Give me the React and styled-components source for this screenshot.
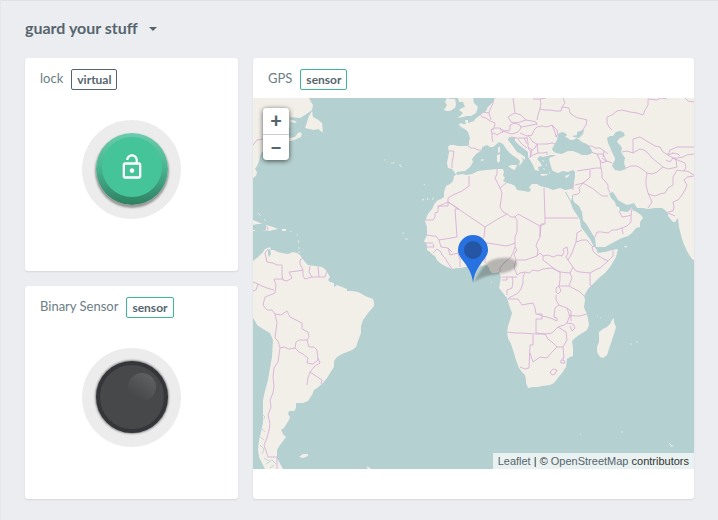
import { createGlobalStyle, styled } from "styled-components";

const LAND = [
  // Europe, Asia and Africa
  "M495 98L493 102 490 105 488 107 486 111 483 113 481 114 478 117 476 118 474 121 471 122 468 123 468 120 465 120 466 124 463 124 460 123 459 125 461 127 463 128 466 130 468 132 469 135 470 138 469 142 469 145 467 146 462 146 458 146 454 145 450 145 448 147 449 152 448 158 447 163 448 168 452 169 455 173 456 175 454 176 453 181 450 184 446 186 444 192 444 197 441 199 438 200 435 203 432 209 428 214 425 221 427 227 427 235 424 241 427 245 427 250 430 252 433 255 435 256 437 260 440 263 443 265 447 267 452 269 457 268 461 268 465 267 473 267 478 267 482 266 487 265 489 268 490 271 492 273 495 273 499 272 501 277 500 283 499 288 503 293 507 298 508 301 509 305 512 313 510 320 508 326 507 332 508 338 511 344 513 350 516 360 519 368 522 372 525 375 526 380 526 383 528 388 533 387 538 387 542 386 550 385 554 383 557 379 562 373 566 367 567 359 570 357 573 356 573 348 572 341 575 338 579 335 584 332 587 330 589 325 588 319 587 314 585 310 584 307 585 300 584 296 588 289 592 285 596 281 600 277 605 273 610 267 613 262 616 257 618 249 612 250 605 252 598 253 596 247 605 247 614 242 622 238 628 236 632 233 636 228 640 227 640 222 643 218 641 215 638 213 635 211 633 210 633 205 637 208 643 208 648 209 655 208 662 208 665 210 668 213 668 216 673 222 675 222 678 218 679 227 681 235 683 242 686 249 688 253 692 259 694 260V98Z",
  // British Isles
  "M458 98H473L474 103 478 107 476 113 471 116 467 116 463 117 458 118 463 113 459 110 462 108 465 107 463 102 459 102Z",
  "M447 98L451 99 455 99 456 104 455 108 450 111 447 111 444 110 447 105 445 102Z",
  // North America
  "M253 98H309L311 102 313 105 312 110 305 115 300 118 290 117 290 125 286 140 262 152 260 156 259 161 257 166 255 169 257 172 256 176 253 178Z",
  "M289 121L293 120 297 122 294 123ZM289 138L295 137 298 133 300 132 302 134 301 137 292 141 289 141Z",
  "M312 111L313 117 317 119 322 123 323 132 320 131 319 129 314 130 305 128 307 122 309 116Z",
  // Caribbean
  "M253 220L258 222 262 224 257 224 253 225ZM262 230L266 230 266 225 273 227 278 229 273 230 270 231ZM282 229L286 229 286 231 282 231ZM253 230L255 230 255 231 253 231Z",
  // South America
  "M253 261L257 258 260 255 263 252 265 249 270 247 271 250 274 250 278 252 282 253 288 254 293 252 297 253 300 255 302 258 305 262 308 265 315 266 322 267 326 270 330 277 328 280 330 282 334 283 334 287 337 285 342 287 347 289 347 291 352 291 358 292 362 294 365 296 373 299 374 303 374 306 368 313 363 320 361 326 361 333 358 341 356 347 352 350 347 352 342 354 337 357 334 361 334 367 330 373 327 378 322 384 317 388 314 390 312 395 308 401 303 403 296 403 296 408 294 411 289 411 288 414 290 417 289 420 287 423 284 428 281 430 283 434 286 437 283 441 280 445 277 450 277 458 283 469H265L262 463 259 457 258 449 259 440 261 432 263 423 263 412 263 400 265 391 268 380 270 368 272 357 273 340 270 333 263 329 257 325 255 321 253 318Z",
  "M299 457L303 454 308 454 308 456 303 458ZM366 466L370 468 371 469 368 469Z",
  // Madagascar
  "M614 318L614 322 616 327 615 331 612 340 609 349 607 355 603 358 600 357 597 352 597 347 599 342 599 332 603 329 607 327 610 324 612 320Z",
];

const SEAS = [
  // Mediterranean
  "M456 174L457 172 465 171 470 167 473 162 472 159 476 154 482 150 482 147 487 145 490 147 493 147 499 142 503 144 507 150 511 154 515 157 518 159 520 161 519 165 517 167 521 164 523 161 522 158 525 160 525 157 521 154 517 152 512 145 508 140 509 137 515 138 515 141 519 145 523 148 528 152 528 157 530 160 533 165 535 170 539 171 538 167 542 166 540 162 537 159 540 156 543 157 547 156 552 155 549 159 550 163 552 170 555 172 558 173 563 171 568 172 573 170 575 172 575 177 574 182 573 188 571 189 565 190 560 188 553 190 548 188 544 187 540 186 537 184 532 184 529 187 531 190 529 192 524 191 517 190 515 186 511 184 507 183 503 181 505 178 503 175 504 172 503 169 497 169 487 170 478 171 472 174 467 175 462 174 458 175Z",
  // Marmara, Black Sea and Azov
  "M548 157L551 155 555 155 555 156 551 157Z",
  "M562 132L565 133 567 135 565 137 568 138 570 140 573 140 577 138 582 142 587 144 590 147 592 151 591 154 587 155 582 155 578 153 573 151 568 151 564 153 561 154 556 153 553 151 552 149 553 147 557 140 558 134Z",
  "M572 136L577 135 577 132 584 130 583 134 579 138 574 137Z",
  // Caspian
  "M616 132L620 131 623 132 625 135 623 137 620 138 618 140 617 142 620 145 622 148 621 152 625 158 624 163 626 169 620 171 615 170 612 166 613 163 615 160 615 158 612 152 610 147 608 143 607 138 610 136 613 136Z",
  // Red Sea and the Gulf
  "M565 192L566 192 571 201 572 198 572 195 573 195 573 200 575 203 579 206 582 212 583 220 587 225 590 230 593 235 595 238 596 247 598 247 598 253 597 250 593 245 590 239 587 235 581 227 580 220 577 215 573 209 570 201 567 196Z",
  "M609 193L613 192 615 195 618 200 623 203 627 205 631 204 634 203 637 208 633 211 632 207 629 211 627 212 620 211 619 207 616 206 615 202 611 198Z",
  // Maracaibo
  "M268 250L270 249 271 254 269 257 268 254Z",
];

const ISLANDS = [
  "M498 148L500 146 500 152 498 153ZM497 155L500 154 500 161 498 163 497 161Z",
  "M508 166L512 165 517 165 515 170 512 169Z",
  "M480 160L483 159 484 160 482 161ZM540 174L547 174 548 175 542 176ZM565 176L570 174 568 177 566 178Z",
  "M542 160L544 161 543 162ZM546 164L547 165 546 166ZM543 168L545 169 544 170ZM549 171L550 173 549 174ZM624 246L627 246 626 248Z",
  "M422 199L424 199 423 201ZM427 198L429 199 427 200ZM432 199L434 197 433 200ZM423 184L425 184 425 185ZM400 166L402 166 401 167Z",
];

const CHANNELS =
  "M262 414L265 417 262 421M261 428L265 432M260 437L264 440M260 445L264 449 262 454M264 458L269 461M266 464L272 460 276 464M270 468L274 465";

const ISLETS =
  "M669 443L672 446M670 446H674M580 434H581M621 432H623M597 316H598M600 318H601M630 344H632M636 342H638M290 231L292 232M297 234L298 236M298 240L299 243M299 247V249M258 213L261 216M264 219L266 221M298 252H300M384 160H385M391 163H395M399 165H401M402 233H404M405 239H408M491 282H492";

const BORDERS = [
  // Western and central Europe
  "M449 151L454 151 453 158 452 163 452 168",
  "M468 146L471 148 474 148 478 150 482 150",
  "M480 113L482 117 486 118 490 121 495 123 494 128 491 130 492 134 492 138 493 142",
  "M493 100L493 104 492 105 490 110 489 113 491 120M483 112L489 113",
  "M491 130L495 128 500 128 503 132 500 133 497 135 494 133 492 134",
  "M500 129L505 131 510 130 510 125 515 123 520 125 521 128 518 132 512 134 503 131",
  "M508 117L511 115 515 113 521 115 524 118 526 120 520 122 515 123 511 122 508 117",
  "M513 98L514 105 515 113M526 120L532 121 536 122 537 125",
  "M540 99L541 104 540 108 539 112 538 115 537 120M533 99L540 99 546 98",
  "M540 109L545 110 550 110 556 111 561 111 562 107 569 108 570 113 574 116 578 118 583 119 587 120 586 125 584 128 582 131M563 98L565 103 562 107",
  "M521 127L527 126 532 125 537 124M537 127L534 130 532 135 527 136 520 133M537 127L542 126 547 127 552 125",
  "M528 135L530 138 533 142 537 144 542 144 547 144 552 143 555 144",
  "M552 125L555 132 556 137M552 125L557 130 558 134 556 137",
  "M511 137L517 138 527 138M518 139L521 143 524 146 527 148M527 137L528 143 528 147 532 150 535 148 537 144M532 150L530 157 533 155 538 153 543 153 547 152 547 155M528 148L531 152 530 158M537 144L538 153M524 138L527 144",
  // Russia, Caucasus and central Asia
  "M667 99L661 98 657 100 648 99 648 105 645 110 643 115 637 113 630 112 622 110 617 111 612 115 607 117 607 123 609 127 612 130M685 98L688 101 694 102",
  "M587 146L592 146 595 148 600 148 604 151 608 154M591 152L597 154 603 154M597 154L600 160 602 163 607 161 612 163M603 154L607 162 602 158M604 151L603 157",
  "M600 160L601 168 596 168 590 169 583 170 577 171",
  "M590 170L590 177 587 180 583 183 579 184 575 185",
  "M573 190L573 183M573 195L578 194 580 192 579 188 583 183 588 186 592 188 597 192 602 196 608 196",
  "M601 168L602 173 602 178 605 181 608 185 608 189 610 192",
  "M619 211L622 217 628 216 631 215 632 208M631 215L631 222 627 226 622 228 623 234M622 228L616 230 612 230 608 233 602 232 597 232 595 237",
  "M622 152L627 151 633 153 633 139 640 137 645 140 650 143 655 146 660 147 663 152 668 155 673 153",
  "M633 153L636 151 640 149 644 150 647 152 652 158 657 162 663 167",
  "M626 168L631 166 637 166 642 169 647 173 646 179 646 185 648 193 652 202 648 208",
  "M647 173L652 174 657 172 663 167 668 169 673 168 677 167 676 160 673 158",
  "M648 194L655 196 660 194 665 193 668 188 673 185 673 177 677 170 682 171 687 171 694 175",
  "M694 176L687 177 684 180 687 185 685 190 682 195 678 200 673 202 674 207 673 211 668 212M668 213L675 216",
  "M694 147L685 147 677 147 670 150 668 155 673 158 677 158 683 157 687 155 694 154M673 158L680 161 685 163 686 167 684 171M672 153L678 154 680 156M666 160L670 162 673 158",
  // North and west Africa
  "M544 188L545 218H578M545 218V224H541L540 237",
  "M469 176L469 186 462 191 453 195 448 198 448 202 485 227 496 220 507 214",
  "M448 206H438V212L435 213V217L433 220H425M448 202L441 205 438 207M448 202V206",
  "M497 169L497 174 495 178 500 188 506 183M500 188L502 193 501 200 500 207 503 212 507 214 511 217 515 217 518 214 540 226 544 224",
  "M448 202L459 209 455 209 457 237 439 240 436 236 433 236 427 235",
  "M425 243H433M427 247H434L433 244M439 240L441 247 448 248 450 255 458 253 460 260 460 267",
  "M433 253L437 249 441 252 442 255 445 258 448 263 452 269M448 248L452 252M458 253L463 248 471 243 478 246",
  "M485 227L484 237 478 241 487 243 494 244 500 245 506 246 510 245 515 243 515 237 517 232 517 220 515 217",
  "M487 243L485 250 485 263M477 248L479 257 480 266",
  "M515 243L515 247 513 253 510 258 505 262 500 268 500 272M515 247L517 250 514 254 516 260 514 267 517 275M502 277H517",
  "M516 260L525 260 531 258 537 256 538 250 536 246 537 243 540 237 540 226",
  "M537 256L540 253 543 256 543 260 547 263 552 267 556 270 560 272",
  // Horn and east Africa
  "M543 256L548 255 553 257 558 255 562 256 564 252 563 249 567 247 568 253 566 257 568 260",
  "M582 230L577 233 576 242 572 253 568 260 573 267 576 271 580 272 590 273 595 270 600 268 608 261 602 258 597 255 593 251 592 247 595 246",
  "M576 242L582 240 587 240 590 244 593 247M608 261L613 256 613 250M590 273L590 279 590 285 593 287",
  "M573 267L570 273 572 278 569 286 580 292 584 296M560 272L570 273M560 272L560 280 559 286H569",
  "M559 286L556 288 556 292 558 294 561 291 559 286M556 295L556 300 559 305 567 308 569 314 570 318M559 305L555 308 554 317 557 318 557 321 553 319 547 317 542 316 537 314",
  "M587 314L580 316 575 316 570 315 567 323 564 325 558 327 552 333 545 334M567 323L573 324 575 328 572 331 570 326M567 308L571 311 571 321",
  // Congo and southern Africa
  "M560 272L552 268 543 269 538 271 533 270 529 273 525 272 523 277 523 283 521 289 518 293 513 296 510 297 508 299H518L522 305 527 304 533 303 535 308 536 314H542V319H536L536 333 545 334",
  "M517 275L520 273 525 272M502 280H507V277M512 277L513 281 512 288 507 290 507 295",
  "M507 332L515 333 521 333 536 334 545 334 548 339 552 342 557 347 563 347 567 340 566 332 558 327",
  "M533 335V345H530L529 368 525 369 520 367M530 353L533 362 540 357 547 358 552 352 557 347M563 347L564 358 562 359",
  "M550 372L553 369 557 370 555 374 552 375 550 372M561 360L564 360 565 363 561 363Z",
  // South America
  "M268 249L265 253 267 262 273 263 277 265 282 265 282 275 283 280 287 281 292 278 289 272 298 271 303 270 300 264 300 260 303 258",
  "M303 270L303 276 305 279 312 277 319 277 325 277 327 271M310 266L309 272 312 277M318 267L319 277",
  "M283 279L274 279 276 285 275 293 265 297 263 305 267 310 272 310 275 314M253 282L258 284 262 286 267 288 274 290M258 284L256 290 253 291",
  "M275 314L277 323 276 330 275 338 278 341 280 348 278 362 274 368 273 377 274 386 273 393 270 400 271 407 268 415 270 424 269 430 267 438 264 445 268 457H277V469",
  "M275 314L281 315 287 311 290 317 296 320 302 323 302 329 308 332 309 337 307 340",
  "M280 348L284 347 289 349 295 348 296 342 299 340H307L309 347 314 347 317 350 318 360 313 364 307 363 308 358 303 354 299 352 295 348",
  "M318 358L320 363 315 366 310 372 308 378 307 385M310 372L316 376 322 380 321 384",
  "M253 145L257 140 263 139M267 226L268 230",
];

const MapTiles = () => (
  <Tiles
    viewBox="253 98 441 371"
    preserveAspectRatio="xMidYMid slice"
    aria-hidden="true"
  >
    <g fill="#f2efe9">
      {LAND.map((d) => (
        <path key={d} d={d} />
      ))}
    </g>
    <g fill="#b5d0d0">
      {SEAS.map((d) => (
        <path key={d} d={d} />
      ))}
    </g>
    <g fill="#f2efe9">
      {ISLANDS.map((d) => (
        <path key={d} d={d} />
      ))}
    </g>
    <path d={CHANNELS} fill="none" stroke="#c3d6d4" />
    <path d={ISLETS} fill="none" stroke="#dfe5df" />
    <g fill="none" stroke="#d8b0d7" strokeWidth="0.9">
      {BORDERS.map((d) => (
        <path key={d} d={d} />
      ))}
    </g>
  </Tiles>
);

const Pin = () => (
  <PinIcon viewBox="0 0 62 48" aria-hidden="true">
    <path
      d="M16 47C21 38 25 30 32 26C42 21 57 22 59 28C60 34 50 38 40 39C31 40 24 42 16 47Z"
      fill="#000"
      opacity="0.24"
      filter="blur(1px)"
    />
    <path
      d="M15 48C14 39 11 34 6 27C2 22 0 19 0 15A15 15 0 0 1 30 15C30 19 28 22 24 27C19 34 16 39 15 48Z"
      fill="#2871e0"
    />
    <circle cx="15" cy="15" r="9" fill="#2456a5" />
  </PinIcon>
);

const UnlockIcon = () => (
  <svg width="28" height="28" viewBox="0 0 24 24" fill="#fff" aria-hidden="true">
    <path d="M12 17c1.100 0 2-.9 2-2s-.9-2-2-2-2 .9-2 2 .9 2 2 2zm6-9h-1V6c0-2.760-2.240-5-5-5S7 3.240 7 6h1.900c0-1.710 1.390-3.100 3.100-3.100s3.100 1.390 3.100 3.100v2H6c-1.100 0-2 .9-2 2v10c0 1.100.9 2 2 2h12c1.100 0 2-.9 2-2V10c0-1.100-.9-2-2-2zm0 12H6V10h12v10z" />
  </svg>
);

const CardTitle = ({ name, kind, tone }) => (
  <CardHeader>
    <CardName>{name}</CardName>
    <Tag $tone={tone}>{kind}</Tag>
  </CardHeader>
);

const App = () => {
  return (
    <>
      <GlobalStyle />
      <Page>
        <BoardButton type="button">
          guard your stuff
          <Caret />
        </BoardButton>
        <Board>
          <Card>
            <CardTitle name="lock" kind="virtual" tone="#56656d" />
            <CardBody>
              <Halo>
                <PushButton type="button" aria-label="lock">
                  <PushFace>
                    <UnlockIcon />
                  </PushFace>
                </PushButton>
              </Halo>
            </CardBody>
          </Card>
          <Card $wide>
            <CardTitle name="GPS" kind="sensor" tone="#3cb890" />
            <MapBox>
              <MapTiles />
              <Pin />
              <ZoomBar>
                <ZoomButton type="button">+</ZoomButton>
                <ZoomButton type="button">−</ZoomButton>
              </ZoomBar>
              <Attribution>
                <a href="#leaflet">Leaflet</a> | ©{" "}
                <a href="#osm">OpenStreetMap</a> contributors
              </Attribution>
            </MapBox>
          </Card>
          <Card>
            <CardTitle name="Binary Sensor" kind="sensor" tone="#3cb890" />
            <CardBody>
              <Halo>
                <Lamp />
              </Halo>
            </CardBody>
          </Card>
        </Board>
      </Page>
    </>
  );
};

const GlobalStyle = createGlobalStyle`
  * {
    box-sizing: border-box;
  }
  body {
    margin: 0;
    background-color: #ecedf1;
    color: #56656d;
    font-family: Lato, sans-serif;
  }
  button {
    border: 0;
    padding: 0;
    color: inherit;
    font-family: inherit;
    cursor: pointer;
  }
`;
const Page = styled.main`
  min-height: 100vh;
  padding: 15px 24px 20px;
  border-top: 1px solid #e0e1e6;
  border-left: 1px solid #e5e6ea;
`;
const BoardButton = styled.button`
  display: flex;
  align-items: center;
  gap: 11px;
  height: 22px;
  margin-bottom: 20px;
  background: none;
  font-size: 16px;
  font-weight: 700;
`;
const Caret = styled.span`
  margin-top: 4px;
  border: 4px solid transparent;
  border-top-color: #56656d;
  border-bottom: 0;
`;
const Board = styled.div`
  display: grid;
  grid-template-columns: repeat(3, 1fr);
  grid-auto-rows: 213px;
  gap: 15px;
`;
const Card = styled.section`
  display: flex;
  flex-direction: column;
  grid-column: span ${({ $wide }) => ($wide ? 2 : 1)};
  grid-row: span ${({ $wide }) => ($wide ? 2 : 1)};
  padding-bottom: 30px;
  border-radius: 3px;
  background-color: #fff;
  box-shadow: 0 1px 2px rgba(0, 0, 0, 0.1);
`;
const CardHeader = styled.header`
  display: flex;
  align-items: center;
  gap: 8px;
  height: 40px;
  padding: 2px 15px 0;
`;
const CardName = styled.h2`
  margin: 0;
  padding-bottom: 2px;
  color: #6b7d85;
  font-size: 13px;
  font-weight: 400;
  line-height: 18px;
`;
const Tag = styled.span`
  padding: 0 5px;
  border: 1px solid ${({ $tone }) => $tone};
  border-radius: 2px;
  font-size: 12px;
  font-weight: 700;
  line-height: 19px;
`;
const CardBody = styled.div`
  flex: 1;
  display: flex;
  align-items: center;
  justify-content: center;
`;
const Halo = styled.div`
  display: grid;
  place-items: center;
  width: 99px;
  height: 99px;
  padding-bottom: 2px;
  border-radius: 50%;
  background-color: #ececec;
`;
const PushButton = styled.button`
  display: grid;
  place-items: center;
  width: 72px;
  height: 72px;
  padding-bottom: 4px;
  border-radius: 50%;
  background: linear-gradient(#6ccbac, #4bb793 45%, #2f8063);
  box-shadow: 0 2px 2px 1px rgba(0, 0, 0, 0.35);
`;
const PushFace = styled.span`
  display: grid;
  place-items: center;
  width: 60px;
  height: 60px;
  border-radius: 50%;
  background-color: #45c49a;
`;
const Lamp = styled.div`
  position: relative;
  width: 72px;
  height: 72px;
  border: 4px solid #35363a;
  border-radius: 50%;
  background-color: #474849;
  box-shadow: 0 0 2px 1px rgba(0, 0, 0, 0.4);
  &::after {
    content: "";
    position: absolute;
    top: 8px;
    right: 8px;
    width: 28px;
    height: 28px;
    border-radius: 50%;
    background: linear-gradient(215deg, #646566, #474849 80%);
  }
`;
const MapBox = styled.div`
  position: relative;
  flex: 1;
  overflow: hidden;
  background-color: #b5d0d0;
`;
const Tiles = styled.svg`
  position: absolute;
  inset: 0;
  width: 100%;
  height: 100%;
`;
const PinIcon = styled.svg`
  position: absolute;
  left: 50%;
  bottom: 50%;
  width: 62px;
  height: 48px;
  margin: 0 0 1px -16px;
`;
const ZoomBar = styled.div`
  position: absolute;
  top: 10px;
  left: 10px;
  overflow: hidden;
  border-radius: 4px;
  box-shadow: 0 1px 5px rgba(0, 0, 0, 0.65);
`;
const ZoomButton = styled.button`
  display: block;
  width: 26px;
  height: 26px;
  padding-bottom: 2px;
  background-color: #fff;
  font-size: 20px;
  font-weight: 900;
  line-height: 22px;
  & + & {
    border-top: 1px solid #ccc;
  }
`;
const Attribution = styled.div`
  position: absolute;
  right: 0;
  bottom: 0;
  padding: 0 5px;
  background-color: rgba(255, 255, 255, 0.7);
  color: #333;
  font-family: "Liberation Sans", sans-serif;
  font-size: 11px;
  line-height: 16px;
  a {
    color: #56656d;
    text-decoration: none;
  }
`;

export default App;
